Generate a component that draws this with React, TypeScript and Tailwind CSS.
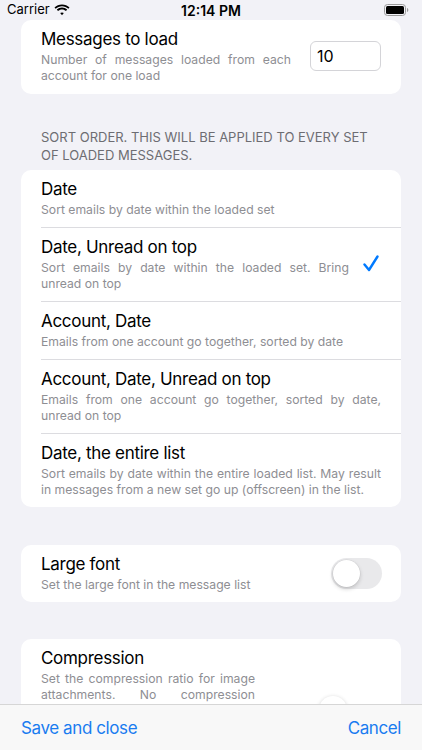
import React from "react";

const font = { fontFamily: "Inter, 'Noto Sans', sans-serif" };

function Wifi() {
  return (
    <svg width="16" height="12" viewBox="0 0 16 12" fill="#000">
      <path d="M8 2.2c2.4 0 4.6.9 6.3 2.5l1.2-1.3C13.5 1.5 10.9.4 8 .4S2.5 1.5.5 3.4l1.2 1.3C3.4 3.1 5.6 2.2 8 2.2z" />
      <path d="M8 5.4c1.5 0 2.9.6 4 1.5l1.2-1.3C11.8 4.4 10 3.6 8 3.6s-3.8.8-5.2 2l1.2 1.3c1.1-.9 2.5-1.5 4-1.5z" />
      <path d="M8 8.5c.7 0 1.3.2 1.8.6L8 11.2 6.2 9.1c.5-.4 1.1-.6 1.8-.6z" />
    </svg>
  );
}

function Battery() {
  return (
    <svg width="25" height="12" viewBox="0 0 25 12">
      <rect x="0.5" y="0.5" width="21" height="11" rx="3" fill="none" stroke="#9a9a9a" />
      <rect x="2" y="2" width="18" height="8" rx="1.5" fill="#000" />
      <path d="M23 4v4c.8-.3 1.3-1.1 1.3-2S23.8 4.3 23 4z" fill="#9a9a9a" />
    </svg>
  );
}

function Check() {
  return (
    <svg width="18" height="18" viewBox="0 0 18 18" fill="none">
      <path d="M2.5 9.5 L7 15 L15.5 1.5" stroke="#007aff" strokeWidth="2.4" strokeLinecap="round" strokeLinejoin="round" />
    </svg>
  );
}

function Toggle() {
  return (
    <div className="w-[51px] h-[31px] rounded-full bg-[#e9e9eb] p-[2px] flex items-center">
      <div className="w-[27px] h-[27px] rounded-full bg-white shadow-[0_2px_4px_rgba(0,0,0,0.18),0_0_0_0.5px_rgba(0,0,0,0.06)]" />
    </div>
  );
}

type RowProps = {
  title: string;
  sub: string;
  checked?: boolean;
  last?: boolean;
};

function SortRow({ title, sub, checked, last }: RowProps) {
  return (
    <div className="pl-[20px]">
      <div
        className={
          "flex items-center pr-[20px] pt-[8px] pb-[9px] " +
          (last ? "" : "border-b border-[#dcdce0]")
        }
      >
        <div className="flex-1 min-w-0">
          <div className="text-[17px] leading-[22px] text-black tracking-[-0.3px]">{title}</div>
          <div className="mt-[2px] text-[12.2px] leading-[16px] text-[#8e8e93] text-justify">{sub}</div>
        </div>
        {checked && (
          <div className="ml-[12px] w-[20px] flex justify-center">
            <Check />
          </div>
        )}
      </div>
    </div>
  );
}

export default function App() {
  return (
    <div className="w-[422px] h-[750px] flex flex-col bg-[#f2f2f7]" style={font}>
      <div className="flex-1 min-h-0 overflow-hidden">
        <div className="h-[20px] flex items-center justify-between px-[7px]">
          <div className="flex items-center gap-[4px] w-[120px]">
            <span className="text-[13px] text-black">Carrier</span>
            <Wifi />
          </div>
          <span className="text-[14px] font-semibold text-black">12:14 PM</span>
          <div className="w-[120px] flex justify-end pr-[6px]">
            <Battery />
          </div>
        </div>

        <div className="mx-[21px] bg-white rounded-[10px] flex items-center pl-[20px] pr-[20px] pt-[8px] pb-[10px]">
          <div className="flex-1 min-w-0">
            <div className="text-[17px] leading-[22px] text-black tracking-[-0.3px]">Messages to load</div>
            <div className="mt-[2px] text-[12.2px] leading-[16px] text-[#8e8e93] text-justify">
              Number of messages loaded from each account for one load
            </div>
          </div>
          <div className="ml-[19px] w-[71px] h-[30px] rounded-[6px] border border-[#d4d4d8] flex items-center px-[6px] text-[16px] text-black">
            10
          </div>
        </div>

        <div className="mt-[34px] mb-[6px] px-[41px] text-[13px] leading-[18px] text-[#6d6d72]">
          SORT ORDER. THIS WILL BE APPLIED TO EVERY SET OF LOADED MESSAGES.
        </div>

        <div className="mx-[21px] bg-white rounded-[10px] overflow-hidden">
          <SortRow title="Date" sub="Sort emails by date within the loaded set" />
          <SortRow
            title="Date, Unread on top"
            sub="Sort emails by date within the loaded set. Bring unread on top"
            checked
          />
          <SortRow title="Account, Date" sub="Emails from one account go together, sorted by date" />
          <SortRow
            title="Account, Date, Unread on top"
            sub="Emails from one account go together, sorted by date, unread on top"
          />
          <SortRow
            title="Date, the entire list"
            sub="Sort emails by date within the entire loaded list. May result in messages from a new set go up (offscreen) in the list."
            last
          />
        </div>

        <div className="mt-[38px] mx-[21px] bg-white rounded-[10px] flex items-center pl-[20px] pr-[19px] pt-[8px] pb-[9px]">
          <div className="flex-1 min-w-0">
            <div className="text-[17px] leading-[22px] text-black tracking-[-0.3px]">Large font</div>
            <div className="mt-[2px] text-[12.2px] leading-[16px] text-[#8e8e93]">
              Set the large font in the message list
            </div>
          </div>
          <Toggle />
        </div>

        <div className="mt-[37px] mx-[21px] bg-white rounded-[10px] flex items-start pl-[20px] pr-[20px] pt-[8px] pb-[10px]">
          <div className="w-[214px]">
            <div className="text-[17px] leading-[22px] text-black tracking-[-0.3px]">Compression</div>
            <div className="mt-[2px] text-[12.2px] leading-[16px] text-[#8e8e93] text-justify">
              Set the compression ratio for image attachments. No compression preserves the original quality.
            </div>
          </div>
          <div className="flex-1 ml-[20px] mt-[49px] relative h-[28px] flex items-center">
            <div className="w-full h-[4px] rounded-full bg-[#e5e5ea]" />
            <div className="absolute left-[44px] w-[28px] h-[28px] rounded-full bg-white shadow-[0_1px_4px_rgba(0,0,0,0.2)]" />
          </div>
        </div>
      </div>

      <div className="h-[46px] shrink-0 bg-[#f8f8f8] border-t border-[#d6d6d6] flex items-center justify-between px-[21px] pt-[2px]">
        <span className="text-[17px] text-[#1a7cf0] tracking-[-0.4px]">Save and close</span>
        <span className="text-[17px] text-[#1a7cf0] tracking-[-0.4px]">Cancel</span>
      </div>
    </div>
  );
}
